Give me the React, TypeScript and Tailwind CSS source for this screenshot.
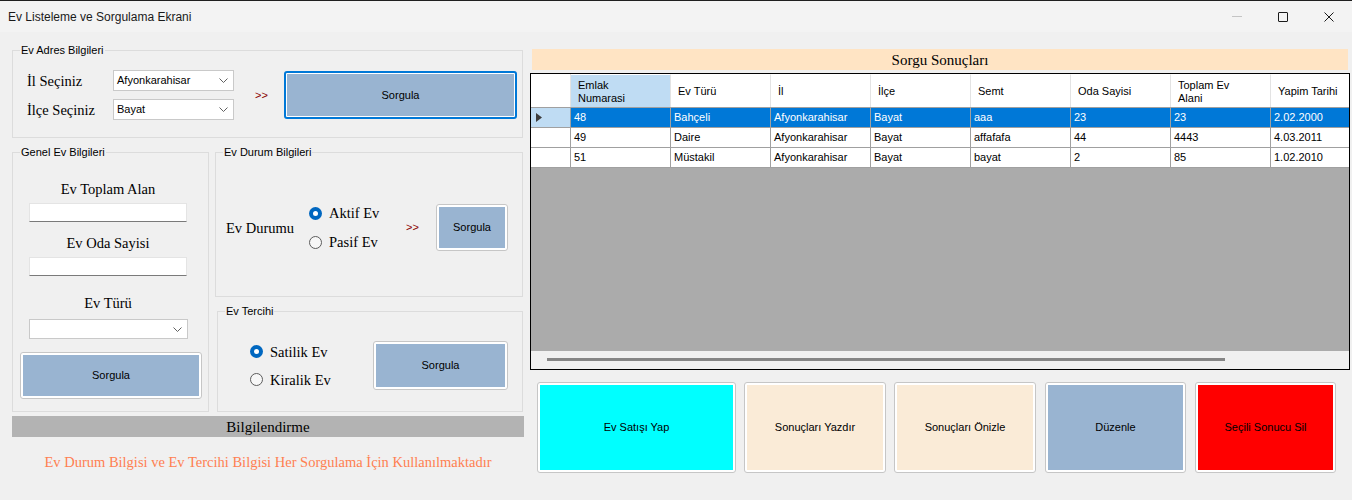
import React from "react";

const SERIF = "font-['Liberation_Serif','Times_New_Roman',serif]";

function Legend({ children }: { children: React.ReactNode }) {
  return (
    <div className="-mt-[8px] ml-[7px] w-fit bg-[#f0f0f0] px-[1px] text-[11px] leading-[14px]">
      {children}
    </div>
  );
}

function Chevron() {
  return (
    <svg width="9" height="5" viewBox="0 0 9 5" className="shrink-0">
      <path d="M0.5 0.5 L4.5 4.5 L8.5 0.5" stroke="#606060" strokeWidth="1" fill="none" />
    </svg>
  );
}

function Combo({ className, text }: { className: string; text: string }) {
  return (
    <div
      className={`flex items-center justify-between bg-white border border-[#c9c9c9] pl-[3px] pr-[5px] ${className}`}
    >
      <span className="text-[11px] leading-[13px]">{text}</span>
      <Chevron />
    </div>
  );
}

function TextBox({ className }: { className: string }) {
  return (
    <div
      className={`bg-white border border-[#e4e4e4] border-b-[#7a7a7a] ${className}`}
    />
  );
}

function WinButton({
  className,
  fill,
  children,
}: {
  className: string;
  fill: string;
  children: React.ReactNode;
}) {
  return (
    <div
      className={`flex rounded-[3px] border border-[#c6c6c6] bg-white p-[2px] ${className}`}
    >
      <div
        className={`flex flex-1 items-center justify-center text-[11px] leading-[13px] ${fill}`}
      >
        {children}
      </div>
    </div>
  );
}

function Radio({ checked, label }: { checked: boolean; label: string }) {
  return (
    <div className="flex h-[20px] items-center">
      {checked ? (
        <div className="flex h-[13px] w-[13px] shrink-0 items-center justify-center rounded-full bg-[#0067c0]">
          <div className="h-[5px] w-[5px] rounded-full bg-white" />
        </div>
      ) : (
        <div className="h-[13px] w-[13px] shrink-0 rounded-full border border-[#5c5c5c] bg-[#f7f7f7]" />
      )}
      <span className={`ml-[7px] text-[14.5px] leading-[18px] ${SERIF}`}>{label}</span>
    </div>
  );
}

const headers = [
  "Emlak\nNumarasi",
  "Ev Türü",
  "İl",
  "İlçe",
  "Semt",
  "Oda Sayisi",
  "Toplam Ev\nAlani",
  "Yapim Tarihi",
];

const rows = [
  ["48", "Bahçeli", "Afyonkarahisar", "Bayat", "aaa", "23", "23", "2.02.2000"],
  ["49", "Daire", "Afyonkarahisar", "Bayat", "affafafa", "44", "4443", "4.03.2011"],
  ["51", "Müstakil", "Afyonkarahisar", "Bayat", "bayat", "2", "85", "1.02.2010"],
];

function Grid() {
  return (
    <div className="mt-[3px] flex h-[297px] w-[820px] flex-col border border-black bg-[#ababab]">
      {/* header */}
      <div className="flex h-[34px] shrink-0 border-b border-[#a0a0a0] bg-white">
        <div className="w-[40px] shrink-0 border-r border-[#e3e3e3] bg-white" />
        {headers.map((h, i) => {
          const last = i === headers.length - 1;
          const sel = i === 0;
          return (
            <div
              key={i}
              className={`flex items-center border-t border-white pl-[7px] pt-[1px] text-[11px] leading-[13px] whitespace-pre ${
                last ? "flex-1" : "w-[100px] shrink-0 border-r border-r-[#e3e3e3]"
              } ${sel ? "bg-[#bfdcf3]" : "bg-white"}`}
            >
              {h}
            </div>
          );
        })}
      </div>
      {rows.map((r, ri) => {
        const sel = ri === 0;
        return (
          <div key={ri} className="flex h-[20px] shrink-0">
            <div
              className={`flex w-[40px] shrink-0 items-center border-r border-b border-[#a0a0a0] ${
                sel ? "bg-[#bfdcf3]" : "bg-white"
              }`}
            >
              {sel && (
                <svg width="7" height="9" viewBox="0 0 7 9" className="ml-[5px]">
                  <path d="M0 0 L6 4.5 L0 9 Z" fill="#3c3c3c" />
                </svg>
              )}
            </div>
            {r.map((c, ci) => {
              const last = ci === r.length - 1;
              return (
                <div
                  key={ci}
                  className={`flex items-center border-b border-[#a0a0a0] pl-[3px] text-[11px] leading-[13px] ${
                    last ? "flex-1" : "w-[100px] shrink-0 border-r"
                  } ${sel ? "bg-[#0078d7] text-white" : "bg-white text-black"}`}
                >
                  {c}
                </div>
              );
            })}
          </div>
        );
      })}
      <div className="flex-1 bg-[#ababab]" />
      <div className="h-[18px] shrink-0 bg-[#f0f0f0]">
        <div className="ml-[16px] mt-[7px] h-[3px] w-[678px] bg-[#858585]" />
      </div>
    </div>
  );
}

export default function App() {
  return (
    <div className="flex h-[500px] w-[1352px] flex-col overflow-hidden bg-[#f0f0f0] font-['Liberation_Sans',Arial,sans-serif] text-black">
      {/* Title bar */}
      <div className="flex h-[32px] shrink-0 items-center border-t border-[#1f1f1f] bg-[#f3f3f3]">
        <span className="ml-[8px] text-[12px] leading-[14px] text-[#1a1a1a]">
          Ev Listeleme ve Sorgulama Ekrani
        </span>
        <div className="ml-auto flex h-full">
          <div className="flex w-[46px] items-center justify-center">
            <div className="h-[1px] w-[10px] bg-[#c4c4c4]" />
          </div>
          <div className="flex w-[46px] items-center justify-center">
            <div className="h-[10px] w-[10px] rounded-[1px] border border-[#1a1a1a]" />
          </div>
          <div className="flex w-[46px] items-center justify-center">
            <svg width="10" height="10" viewBox="0 0 10 10">
              <path d="M0.5 0.5 L9.5 9.5 M9.5 0.5 L0.5 9.5" stroke="#1a1a1a" strokeWidth="1" />
            </svg>
          </div>
        </div>
      </div>

      {/* Body */}
      <div className="flex flex-1">
        {/* Left column */}
        <div className="ml-[12px] flex w-[512px] shrink-0 flex-col">
          {/* Ev Adres Bilgileri */}
          <div className="mt-[18px] h-[88px] w-[511px] border border-[#dcdcdc]">
            <Legend>Ev Adres Bilgileri</Legend>
            <div className="mt-[13px] flex items-start pl-[14px]">
              <div className="flex flex-col gap-[8px]">
                <div className="flex h-[21px] items-center">
                  <span className={`w-[86px] text-[14.5px] leading-[18px] ${SERIF}`}>İl Seçiniz</span>
                  <Combo className="h-[21px] w-[121px]" text="Afyonkarahisar" />
                </div>
                <div className="flex h-[21px] items-center">
                  <span className={`w-[86px] text-[14.5px] leading-[18px] ${SERIF}`}>İlçe Seçiniz</span>
                  <Combo className="h-[21px] w-[121px]" text="Bayat" />
                </div>
              </div>
              <span className="ml-[21px] w-[29px] self-center text-[11px] leading-[13px] text-[#8b0000]">
                &gt;&gt;
              </span>
              <div className="mt-[1px] flex h-[48px] w-[233px] rounded-[3px] border-2 border-[#0078d7] bg-white p-[1px]">
                <div className="flex flex-1 items-center justify-center bg-[#99b4d1] text-[11px] leading-[13px]">
                  Sorgula
                </div>
              </div>
            </div>
          </div>

          {/* middle groups */}
          <div className="mt-[14px] flex">
            {/* Genel Ev Bilgileri */}
            <div className="h-[260px] w-[197px] shrink-0 border border-[#dcdcdc]">
              <Legend>Genel Ev Bilgileri</Legend>
              <div className="flex flex-col pl-[7px]">
                <div className={`ml-[9px] mt-[21px] w-[158px] text-center text-[14.5px] leading-[18px] ${SERIF}`}>
                  Ev Toplam Alan
                </div>
                <TextBox className="ml-[9px] mt-[5px] h-[19px] w-[158px]" />
                <div className={`ml-[9px] mt-[12px] w-[158px] text-center text-[14.5px] leading-[18px] ${SERIF}`}>
                  Ev Oda Sayisi
                </div>
                <TextBox className="ml-[9px] mt-[5px] h-[19px] w-[158px]" />
                <div className={`ml-[9px] mt-[18px] w-[158px] text-center text-[14.5px] leading-[18px] ${SERIF}`}>
                  Ev Türü
                </div>
                <Combo className="ml-[9px] mt-[7px] h-[20px] w-[159px]" text="" />
                <WinButton className="mt-[13px] h-[47px] w-[182px]" fill="bg-[#99b4d1]">
                  Sorgula
                </WinButton>
              </div>
            </div>

            <div className="ml-[6px] flex flex-col">
              {/* Ev Durum Bilgileri */}
              <div className="h-[145px] w-[308px] border border-[#dcdcdc]">
                <Legend>Ev Durum Bilgileri</Legend>
                <div className="mt-[45px] flex h-[47px] items-center pl-[10px]">
                  <span className={`w-[83px] text-[14.5px] leading-[18px] ${SERIF}`}>Ev Durumu</span>
                  <div className="flex w-[97px] flex-col gap-[9px]">
                    <Radio checked label="Aktif Ev" />
                    <Radio checked={false} label="Pasif Ev" />
                  </div>
                  <span className="w-[30px] text-[11px] leading-[13px] text-[#8b0000]">&gt;&gt;</span>
                  <WinButton className="h-[47px] w-[72px]" fill="bg-[#99b4d1]">
                    Sorgula
                  </WinButton>
                </div>
              </div>

              {/* Ev Tercihi */}
              <div className="ml-[2px] mt-[14px] h-[101px] w-[306px] border border-[#dcdcdc]">
                <Legend>Ev Tercihi</Legend>
                <div className="mt-[23px] flex h-[49px] items-center pl-[32px]">
                  <div className="flex w-[123px] flex-col gap-[8px]">
                    <Radio checked label="Satilik Ev" />
                    <Radio checked={false} label="Kiralik Ev" />
                  </div>
                  <WinButton className="h-[49px] w-[135px]" fill="bg-[#99b4d1]">
                    Sorgula
                  </WinButton>
                </div>
              </div>
            </div>
          </div>

          {/* Bilgilendirme */}
          <div className={`mt-[4px] flex h-[21px] w-[512px] items-center justify-center bg-[#b3b3b3] text-[15px] leading-[18px] ${SERIF}`}>
            Bilgilendirme
          </div>
          <div className={`mt-[16px] w-[512px] text-center text-[14.5px] leading-[18px] text-[#ff7f50] ${SERIF}`}>
            Ev Durum Bilgisi ve Ev Tercihi Bilgisi Her Sorgulama İçin Kullanılmaktadır
          </div>
        </div>

        {/* Right column */}
        <div className="ml-[6px] flex w-[822px] flex-col">
          <div className={`ml-[2px] mt-[17px] flex h-[21px] w-[816px] items-center justify-center bg-[#ffe4c4] text-[15px] leading-[18px] ${SERIF}`}>
            Sorgu Sonuçları
          </div>
          <Grid />
          <div className="mt-[12px] flex h-[91px]">
            <WinButton className="ml-[7px] h-[91px] w-[199px]" fill="bg-[#00ffff]">
              Ev Satışı Yap
            </WinButton>
            <WinButton className="ml-[8px] h-[91px] w-[142px]" fill="bg-[#faebd7]">
              Sonuçları Yazdır
            </WinButton>
            <WinButton className="ml-[8px] h-[91px] w-[142px]" fill="bg-[#faebd7]">
              Sonuçları Önizle
            </WinButton>
            <WinButton className="ml-[9px] h-[91px] w-[141px]" fill="bg-[#99b4d1]">
              Düzenle
            </WinButton>
            <WinButton className="ml-[9px] h-[91px] w-[141px]" fill="bg-[#ff0000]">
              Seçili Sonucu Sil
            </WinButton>
          </div>
        </div>
      </div>
    </div>
  );
}
